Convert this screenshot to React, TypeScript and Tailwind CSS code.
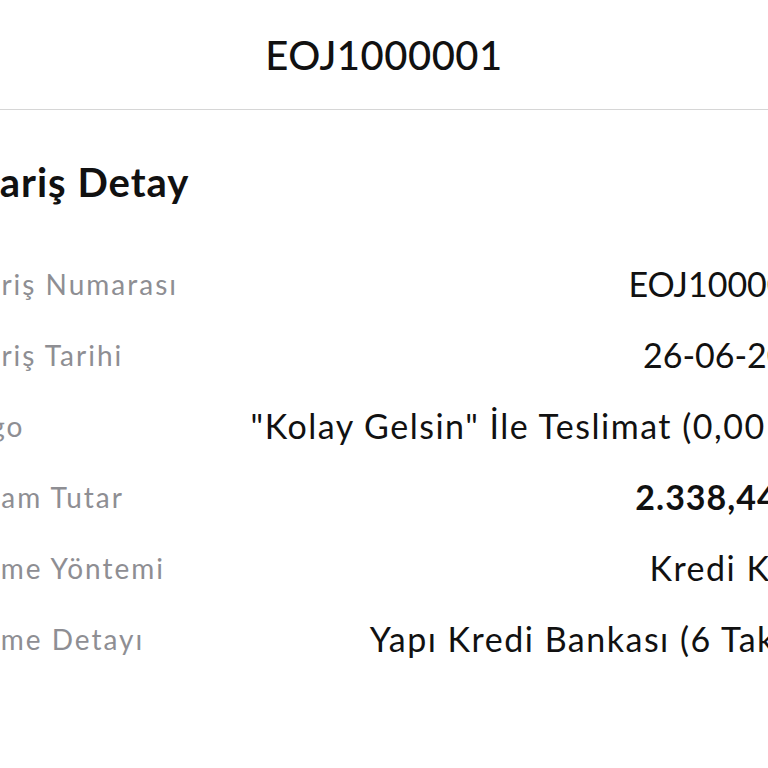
const rows: { label: string; value: string; bold?: boolean; tight?: boolean }[] = [
  { label: 'Sipariş Numarası', value: 'EOJ1000001', tight: true },
  { label: 'Sipariş Tarihi', value: '26-06-2024', tight: true },
  { label: 'Kargo', value: '"Kolay Gelsin" İle Teslimat (0,00 TL)' },
  { label: 'Toplam Tutar', value: '2.338,44 TL', bold: true },
  { label: 'Ödeme Yöntemi', value: 'Kredi Kartı' },
  { label: 'Ödeme Detayı', value: 'Yapı Kredi Bankası (6 Taksit)' },
]

export default function App() {
  return (
    <div className="w-[768px] h-[768px] overflow-hidden bg-white text-[#111] font-['Lato','Noto_Sans',sans-serif]">
      <div className="w-[884px] -ml-[58px]">
        <header className="h-[110px] flex items-center justify-center border-b border-[#d6d6d6]">
          <h1 className="text-[40px] font-medium tracking-[0.5px]">EOJ1000001</h1>
        </header>
        <section className="pt-[48px]">
          <h2 className="text-[40px] leading-[48px] font-bold tracking-[1px]">Sipariş Detay</h2>
          <div className="mt-[42px]">
            {rows.map((r) => (
              <div key={r.label} className="h-[71px] flex items-center justify-between">
                <span className="text-[28px] tracking-[2px] text-[#8e8e93]">{r.label}</span>
                <span
                  className={
                    r.bold
                      ? 'text-[34px] font-bold tracking-[1px]'
                      : r.tight
                        ? 'text-[34px] tracking-[0px]'
                        : 'text-[34px] tracking-[1.5px]'
                  }
                >
                  {r.value}
                </span>
              </div>
            ))}
          </div>
        </section>
      </div>
    </div>
  )
}
